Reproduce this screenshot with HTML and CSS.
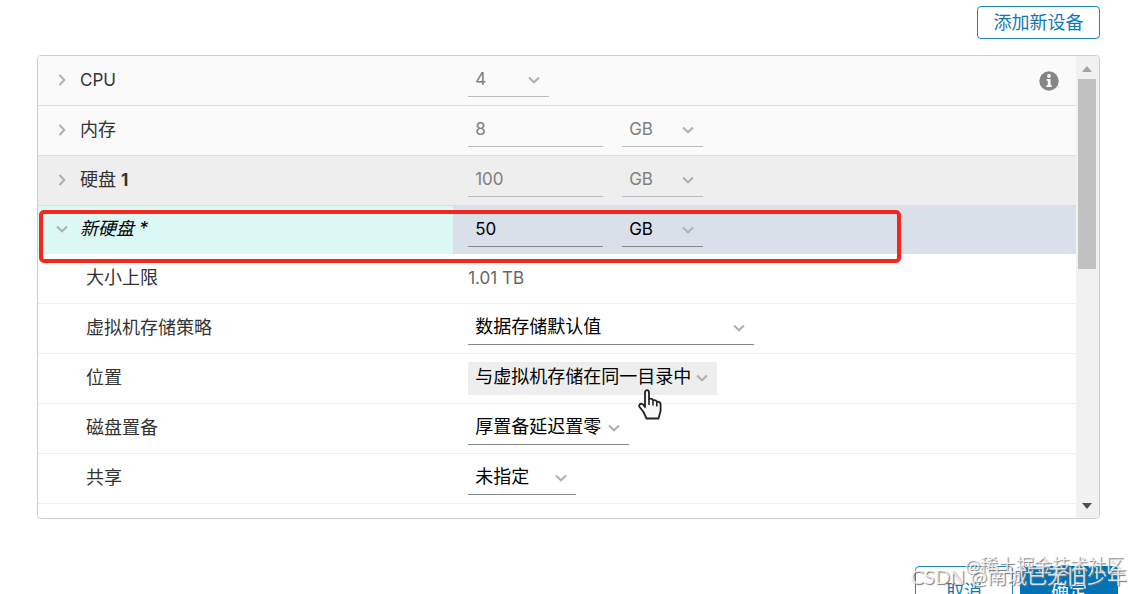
FILE: index.html
```html
<!DOCTYPE html>
<html lang="zh-CN">

<head>
    <meta charset="UTF-8">
    <meta name="viewport" content="width=device-width, initial-scale=1.0">
    <title>编辑设置</title>
    <link rel="stylesheet" href="styles.css">
</head>

<body>

    <svg class="symbols" aria-hidden="true">
        <symbol id="caret" viewBox="0 0 12 8">
            <path d="M1 1.5 6 6.3 11 1.5" fill="none" stroke="currentColor" stroke-width="2" />
        </symbol>
    </svg>

    <main class="dialog">
        <div class="toolbar">
            <button type="button" class="btn btn_small">添加新设备</button>
        </div>

        <div class="panel">
            <div class="devices">
                <div class="row">
                    <div class="name">
                        <button type="button" class="toggle" aria-label="展开 CPU"><svg class="caret"><use href="#caret" /></svg></button>
                        <label class="latin" for="cpu">CPU</label>
                    </div>
                    <div class="value">
                        <span class="select short muted">
                            <select id="cpu"><option>4</option></select>
                            <svg class="caret"><use href="#caret" /></svg>
                        </span>
                        <svg class="info" viewBox="0 0 20 20" role="img" aria-label="信息">
                            <circle cx="10" cy="10" r="9.7" fill="#858585" />
                            <circle cx="10" cy="5" r="1.9" fill="#fafafa" />
                            <path d="M7.6 8h4v6.200h1.200v1.800H7.400v-1.800h1.400V9.800H7.600z" fill="#fafafa" />
                        </svg>
                    </div>
                </div>

                <div class="row">
                    <div class="name">
                        <button type="button" class="toggle" aria-label="展开内存"><svg class="caret"><use href="#caret" /></svg></button>
                        <label for="memory">内存</label>
                    </div>
                    <div class="value">
                        <input class="number muted" id="memory" type="text" value="8">
                        <span class="select short muted">
                            <select aria-label="内存单位"><option>GB</option></select>
                            <svg class="caret"><use href="#caret" /></svg>
                        </span>
                    </div>
                </div>

                <div class="row shaded">
                    <div class="name">
                        <button type="button" class="toggle" aria-label="展开硬盘 1"><svg class="caret"><use href="#caret" /></svg></button>
                        <label for="disk">硬盘 <b>1</b></label>
                    </div>
                    <div class="value">
                        <input class="number muted" id="disk" type="text" value="100">
                        <span class="select short muted">
                            <select aria-label="硬盘单位"><option>GB</option></select>
                            <svg class="caret"><use href="#caret" /></svg>
                        </span>
                    </div>
                </div>

                <div class="row added">
                    <div class="name">
                        <button type="button" class="toggle open" aria-label="收起新硬盘"><svg class="caret"><use href="#caret" /></svg></button>
                        <label for="new_disk">新硬盘 *</label>
                    </div>
                    <div class="value">
                        <input class="number" id="new_disk" type="text" value="50">
                        <span class="select short">
                            <select aria-label="新硬盘单位"><option>GB</option></select>
                            <svg class="caret"><use href="#caret" /></svg>
                        </span>
                    </div>
                    <div class="highlight"></div>
                </div>

                <div class="row detail">
                    <div class="name">大小上限</div>
                    <div class="value"><span class="static">1.01 TB</span></div>
                </div>

                <div class="row detail">
                    <div class="name"><label for="policy">虚拟机存储策略</label></div>
                    <div class="value">
                        <span class="select policy">
                            <select id="policy"><option>数据存储默认值</option></select>
                            <svg class="caret"><use href="#caret" /></svg>
                        </span>
                    </div>
                </div>

                <div class="row detail">
                    <div class="name"><label for="location">位置</label></div>
                    <div class="value">
                        <span class="select location">
                            <select id="location"><option>与虚拟机存储在同一目录中</option></select>
                            <svg class="caret"><use href="#caret" /></svg>
                            <svg class="pointer" viewBox="0 0 24 31" aria-hidden="true">
                                <path d="M7 18V4Q7 1.200 9 1.200T11 4v6q3.200-1 4 1.200 3-.6 3.800 1.400 3.800-.4 3.800 3.200v6L20.500 29.500H8.500L5.500 23 1.200 17.500Q1 14.600 3.500 14.600 5 14.800 7 18z" fill="#f8f8f8" stroke="#222" stroke-width="1.8" stroke-linejoin="round" />
                                <path d="M11 10v6M15 11.500V16.500M18.800 13V17.500" fill="none" stroke="#222" stroke-width="1.6" />
                            </svg>
                        </span>
                    </div>
                </div>

                <div class="row detail">
                    <div class="name"><label for="provision">磁盘置备</label></div>
                    <div class="value">
                        <span class="select provision">
                            <select id="provision"><option>厚置备延迟置零</option></select>
                            <svg class="caret"><use href="#caret" /></svg>
                        </span>
                    </div>
                </div>

                <div class="row detail">
                    <div class="name"><label for="sharing">共享</label></div>
                    <div class="value">
                        <span class="select sharing">
                            <select id="sharing"><option>未指定</option></select>
                            <svg class="caret"><use href="#caret" /></svg>
                        </span>
                    </div>
                </div>
            </div>

            <div class="scrollbar" aria-hidden="true">
                <span class="arrow up"></span>
                <span class="thumb"></span>
                <span class="arrow down"></span>
            </div>
        </div>

        <div class="footer">
            <button type="button" class="btn">取消</button>
            <button type="button" class="btn btn_primary">确定</button>
        </div>

        <div class="watermark community">@稀土掘金技术社区</div>
        <div class="watermark author">CSDN @南城已无旧少年</div>
    </main>

</body>

</html>
```
FILE: styles.css
```css
* {
    box-sizing: border-box;
}

body {
    margin: 0;
    background: white;
    color: #333;
    font-family: Inter, "Noto Sans CJK SC", sans-serif;
    font-size: 18px;
    line-height: 24px;
}

.symbols {
    display: none;
}

.dialog {
    position: relative;
    height: 100vh;
    padding: 6px 42px 0 37px;
    overflow: hidden;
}

.toolbar {
    display: flex;
    justify-content: flex-end;
    margin-bottom: 16px;
}

.btn {
    width: 98px;
    height: 52px;
    padding: 0;
    border: 1px solid #1f82bd;
    border-radius: 4px;
    background: white;
    color: #0f78b5;
    font: inherit;
}

.btn_small {
    width: 123px;
    height: 33px;
}

.btn_primary {
    border-color: #0072b5;
    background: #0072b5;
    color: white;
}

/* device list */

.panel {
    display: flex;
    height: calc(100vh - 130px);
    border: 1px solid #ccc;
    border-radius: 4px;
    overflow: hidden;
}

.devices {
    flex: 1;
    overflow: hidden;
}

.row {
    position: relative;
    display: grid;
    grid-template-columns: 40% 1fr;
    height: 50px;
    border-bottom: 1px solid #ddd;
    background: #fafafa;
}

.shaded {
    background: #eee;
}

.added {
    height: 48px;
    border: none;
    background: #d9e0ea;
    color: black;
}

.added .name {
    background: #dcf8f4;
    font-style: italic;
}

.detail {
    border-color: #eee;
    background: white;
}

.name {
    display: flex;
    align-items: center;
    padding: 0 0 2px 16px;
}

.detail .name {
    padding-left: 48px;
}

.name b,
.latin {
    font-size: 17px;
}

.toggle {
    display: flex;
    align-items: center;
    justify-content: center;
    width: 16px;
    height: 24px;
    margin-right: 10px;
    padding: 0;
    border: none;
    background: none;
}

.toggle .caret {
    transform: rotate(-90deg);
}

.toggle.open .caret {
    transform: none;
}

.caret {
    flex: none;
    width: 12px;
    height: 8px;
    color: #b0b0b0;
}

.value {
    display: flex;
    align-items: center;
    gap: 19px;
    padding: 0 17px 0 15px;
}

.static {
    padding-bottom: 2px;
    color: #666;
    font-size: 17px;
}

.number,
.select select {
    height: 33px;
    margin: 0;
    padding: 0 0 2px 7px;
    border: none;
    border-bottom: 1px solid #888;
    border-radius: 0;
    outline: none;
    background: transparent;
    color: black;
    font: inherit;
}

.number {
    width: 135px;
    font-size: 17px;
}

.select {
    position: relative;
    display: flex;
}

.select select {
    width: 100%;
    appearance: none;
}

.select .caret {
    position: absolute;
    top: 12px;
    right: 9px;
    pointer-events: none;
}

.short {
    width: 81px;
}

.short select {
    font-size: 17px;
}

.muted,
.muted select {
    border-color: #bbb;
    color: #808080;
}

.policy {
    width: 286px;
}

.location {
    z-index: 1;
    width: 249px;
}

.location select {
    border-color: #eee;
    background: #eee;
}

.provision {
    width: 161px;
}

.sharing {
    width: 108px;
}

.info {
    width: 20px;
    height: 20px;
    margin-left: auto;
}

.pointer {
    position: absolute;
    top: 27px;
    left: 170px;
    width: 24px;
    height: 31px;
    pointer-events: none;
}

/* red frame around the new disk */

.highlight {
    position: absolute;
    top: 4px;
    right: 175px;
    bottom: -9px;
    left: 1px;
    z-index: 1;
    border: 4px solid #f5261b;
    border-radius: 5px;
    pointer-events: none;
}

.scrollbar {
    display: flex;
    flex-direction: column;
    align-items: center;
    width: 23px;
    padding: 10px 2px 9px 0;
    background: #f1f1f1;
}

.arrow {
    border: 5px solid transparent;
}

.up {
    border-top: none;
    border-bottom: 6px solid #a3a3a3;
}

.down {
    margin-top: auto;
    border-bottom: none;
    border-top: 6px solid #505050;
}

.thumb {
    width: 18px;
    height: 43%;
    margin-top: 7px;
    background: #c1c1c1;
}

.footer {
    display: flex;
    justify-content: flex-end;
    gap: 7px;
    margin: 47px -18px 0 0;
}

.watermark {
    position: absolute;
    color: rgba(255, 255, 255, 0.8);
    font-family: Lato, "Noto Sans CJK SC", sans-serif;
    text-shadow: 1px 1px 1px #777;
    white-space: nowrap;
    pointer-events: none;
}

.community {
    right: 18px;
    bottom: 17px;
}

.author {
    right: 15px;
    bottom: 6px;
    font-size: 20px;
}
```
